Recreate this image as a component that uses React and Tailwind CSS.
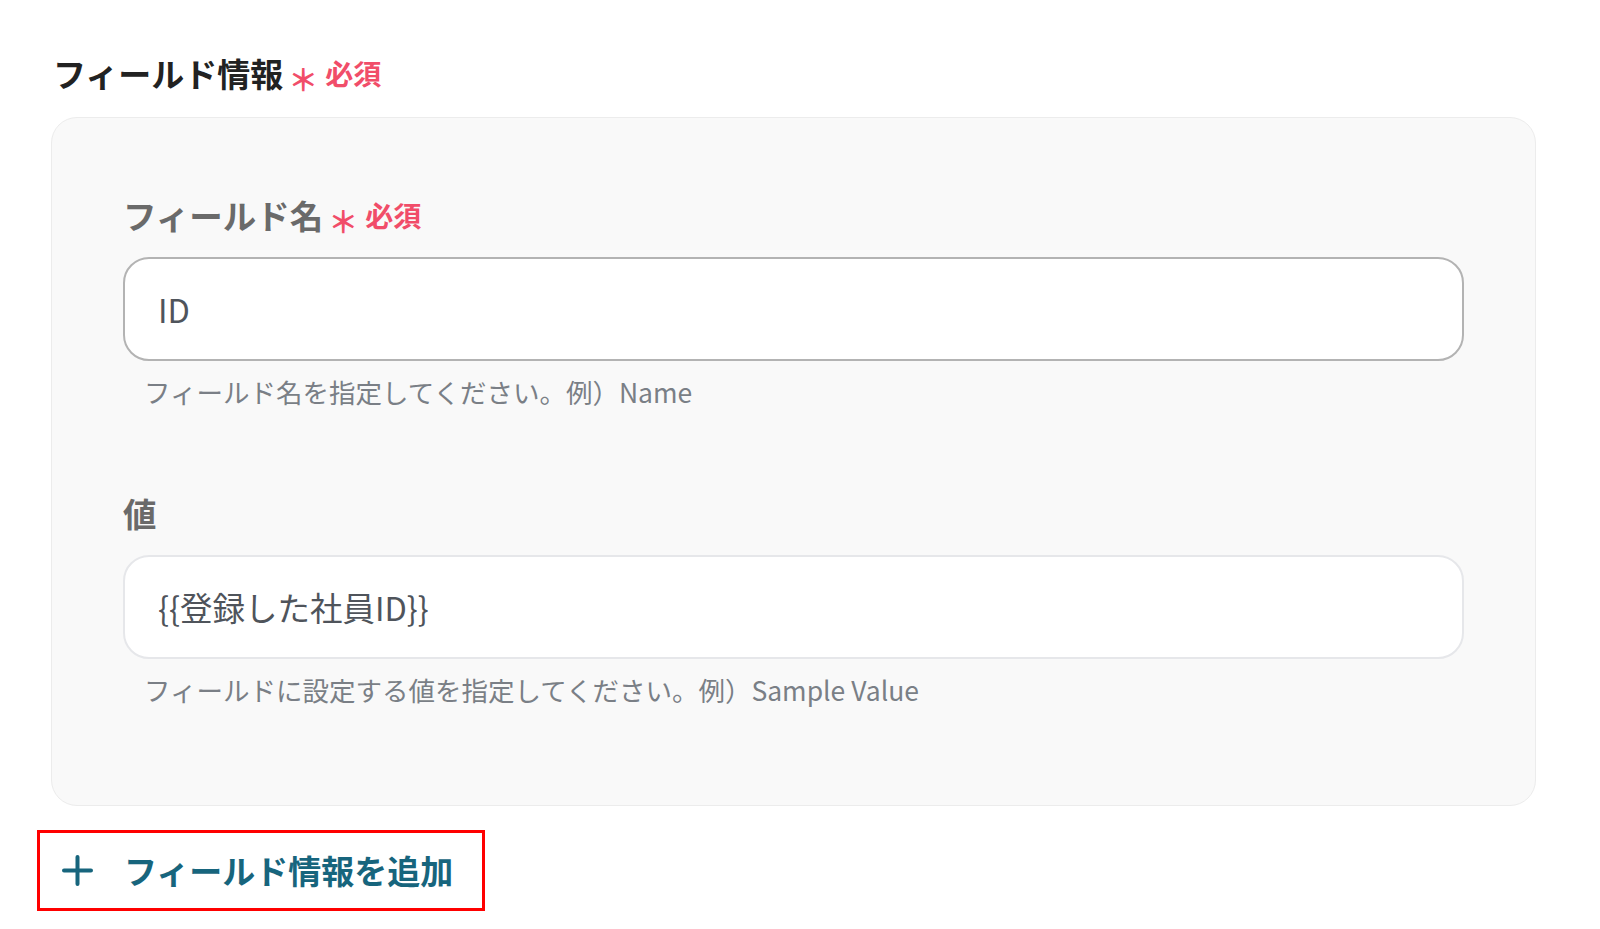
const FONT = { fontFamily: '"Noto Sans CJK JP", "Noto Sans", sans-serif' };

const Required = () => (
  <span className="ml-[5px] inline-flex items-center gap-[7px] text-[#f14d69] font-bold text-[28px]">
    <span className="text-[30px] leading-none translate-y-[5px]">＊</span>
    <span>必須</span>
  </span>
);

const Field = ({ label, required, value, help, strong }) => (
  <div className="flex flex-col">
    <div className="flex items-center h-[40px] text-[33.5px] font-bold text-[#6a6a6a] leading-[40px]">
      {label}
      {required && <Required />}
    </div>
    <div
      className={`mt-[22px] h-[104px] rounded-[26px] bg-white flex items-center pl-[33px] text-[32.5px] text-[#4f545b] ${
        strong ? "border-2 border-[#b3b3b3]" : "border-2 border-[#e6e7ea]"
      }`}
    >
      {value}
    </div>
    <p className="mt-[13px] pl-[21px] h-[36px] leading-[36px] text-[26.5px] text-[#7a7f86]">{help}</p>
  </div>
);

export default function App() {
  return (
    <div className="min-h-[929px] w-full bg-white pt-[52px] pl-[51px]" style={FONT}>
      <h2 className="flex items-center h-[42px] pl-[2px] text-[33px] font-bold text-[#222222] leading-[42px]">
        フィールド情報
        <Required />
      </h2>

      <div className="mt-[23px] w-[1485px] h-[689px] rounded-[26px] bg-[#f9f9f9] border border-[#ececec] pt-[77px] px-[71px]">
        <Field
          label="フィールド名"
          required
          strong
          value="ID"
          help="フィールド名を指定してください。例）Name"
        />
        <div className="mt-[83px]">
          <Field
            label="値"
            value="{{登録した社員ID}}"
            help="フィールドに設定する値を指定してください。例）Sample Value"
          />
        </div>
      </div>

      <button className="mt-[24px] -ml-[14px] w-[448px] h-[81px] border-[3px] border-[#ff0000] flex items-center pl-[22px] text-[#17657d] text-[33px] font-bold">
        <svg width="31" height="31" viewBox="0 0 31 31" className="shrink-0">
          <path d="M15.5 2v27M2 15.5h27" stroke="currentColor" strokeWidth="4" strokeLinecap="round" />
        </svg>
        <span className="ml-[31px]">フィールド情報を追加</span>
      </button>
    </div>
  );
}
